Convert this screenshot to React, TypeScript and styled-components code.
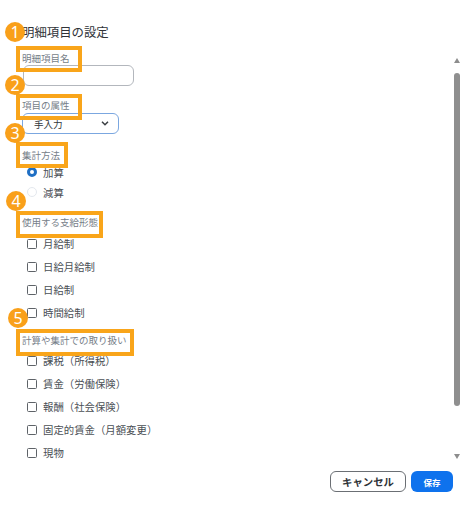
import React from "react";
import styled, { createGlobalStyle } from "styled-components";

const Global = createGlobalStyle`
  html, body { margin: 0; padding: 0; background: #fff; }
  body { font-family: "Noto Sans CJK JP", "Noto Sans", sans-serif; overflow: hidden; }
`;

const Dialog = styled.div`
  position: relative;
  width: 470px;
  height: 513px;
  box-sizing: border-box;
  padding: 22px 8px 20px 22px;
  display: flex;
  flex-direction: column;
`;
const Title = styled.h1`
  margin: 0;
  height: 20px;
  font-size: 12.4px;
  line-height: 20px;
  font-weight: 400;
  color: #2f3338;
`;
const Body = styled.div`
  display: flex;
  height: 418px;
  margin-top: 8px;
`;
const Form = styled.div`
  flex: 1;
  display: flex;
  flex-direction: column;
`;
const Label = styled.div<{ $top: number }>`
  margin-top: ${(p) => p.$top}px;
  height: 14px;
  font-size: 9.5px;
  line-height: 14px;
  color: #767e88;
`;
const Input = styled.div`
  width: 111px;
  height: 21px;
  box-sizing: border-box;
  margin-left: 1px;
  border: 1.5px solid #b3b7bd;
  border-radius: 6px;
  background: #fff;
`;
const Select = styled.div`
  width: 97px;
  height: 21px;
  box-sizing: border-box;
  margin-top: 1px;
  padding: 0 9px 0 11px;
  border: 1.5px solid #7ba7e0;
  border-radius: 6px;
  display: flex;
  align-items: center;
  justify-content: space-between;
  font-size: 9.5px;
  color: #33373c;
`;
const OptionRow = styled.div<{ $h: number; $top?: number }>`
  height: ${(p) => p.$h}px;
  margin-top: ${(p) => p.$top ?? 0}px;
  display: flex;
  align-items: center;
  padding-left: 5px;
  gap: 6px;
  font-size: 10.4px;
  color: #4a4f55;
`;
const Radio = styled.span<{ $on?: boolean }>`
  width: 10px;
  height: 10px;
  box-sizing: border-box;
  border-radius: 50%;
  border: ${(p) => (p.$on ? "3px solid #1f6fc4" : "1px solid #e4e8ee")};
  background: #fff;
`;
const Check = styled.span`
  width: 10px;
  height: 10px;
  box-sizing: border-box;
  border: 1.5px solid #5e6368;
  border-radius: 1.5px;
  background: #fff;
`;
const ScrollTrack = styled.div`
  width: 8px;
  margin-right: 1px;
  display: flex;
  flex-direction: column;
  align-items: center;
`;
const ArrowUp = styled.span`
  width: 0;
  height: 0;
  margin-top: 8px;
  border-left: 3px solid transparent;
  border-right: 3px solid transparent;
  border-bottom: 5px solid #8d8d8d;
`;
const Thumb = styled.span`
  width: 6px;
  height: 333px;
  margin-top: 10px;
  border-radius: 3px;
  background: #8f8f8f;
`;
const ArrowDown = styled.span`
  width: 0;
  height: 0;
  margin-top: 48px;
  border-left: 3px solid transparent;
  border-right: 3px solid transparent;
  border-top: 5px solid #8d8d8d;
`;
const Footer = styled.div`
  display: flex;
  justify-content: flex-end;
  gap: 5px;
  margin: 3px 9px 0 0;
`;
const Cancel = styled.button`
  width: 76px;
  height: 21px;
  padding: 0;
  border: 1.5px solid #6b6f74;
  border-radius: 6px;
  background: #fff;
  color: #2f3338;
  font: 700 10.4px "Noto Sans CJK JP", sans-serif;
`;
const Save = styled.button`
  width: 42px;
  height: 21px;
  padding: 0;
  border: 0;
  border-radius: 6px;
  background: #0e72ed;
  color: #fff;
  font: 700 8.5px "Noto Sans CJK JP", sans-serif;
`;
const Highlight = styled.div<{ $x: number; $y: number; $w: number; $h: number }>`
  position: absolute;
  left: ${(p) => p.$x}px;
  top: ${(p) => p.$y}px;
  width: ${(p) => p.$w}px;
  height: ${(p) => p.$h}px;
  box-sizing: border-box;
  border: 4px solid #f9a51a;
`;
const Badge = styled.div<{ $x: number; $y: number }>`
  position: absolute;
  left: ${(p) => p.$x - 10}px;
  top: ${(p) => p.$y - 10}px;
  width: 20px;
  height: 20px;
  border-radius: 50%;
  background: #f9a01a;
  color: #fff;
  font: 400 16px/20px "Noto Sans", sans-serif;
  text-align: center;
`;

const ChevronIcon = () => (
  <svg width="8" height="5" viewBox="0 0 8 5" fill="none">
    <path d="M1 .8l3 3 3-3" stroke="#3a3e43" strokeWidth="1.5" />
  </svg>
);

const pay = ["月給制", "日給月給制", "日給制", "時間給制"];
const calc = ["課税（所得税）", "賃金（労働保険）", "報酬（社会保険）", "固定的賃金（月額変更）", "現物"];
const boxes = [
  { x: 16, y: 46, w: 66, h: 26 },
  { x: 16, y: 94, w: 66, h: 26 },
  { x: 16, y: 142, w: 52, h: 26 },
  { x: 16, y: 211, w: 87, h: 27 },
  { x: 16, y: 329, w: 118, h: 27 },
];
const badges = [
  { x: 15, y: 32 },
  { x: 15, y: 85 },
  { x: 15, y: 133 },
  { x: 16, y: 201 },
  { x: 18, y: 318 },
];

export default function App() {
  return (
    <Dialog>
      <Global />
      <Title>明細項目の設定</Title>
      <Body>
        <Form>
          <Label $top={1}>明細項目名</Label>
          <Input />
          <Label $top={12}>項目の属性</Label>
          <Select>
            手入力
            <ChevronIcon />
          </Select>
          <Label $top={14}>集計方法</Label>
          <OptionRow $h={20} $top={0}>
            <Radio $on />
            加算
          </OptionRow>
          <OptionRow $h={20}>
            <Radio />
            減算
          </OptionRow>
          <Label $top={13}>使用する支給形態</Label>
          {pay.map((t, i) => (
            <OptionRow key={t} $h={23} $top={i === 0 ? 3 : 0}>
              <Check />
              {t}
            </OptionRow>
          ))}
          <Label $top={9}>計算や集計での取り扱い</Label>
          {calc.map((t, i) => (
            <OptionRow key={t} $h={23} $top={i === 0 ? 2 : 0}>
              <Check />
              {t}
            </OptionRow>
          ))}
        </Form>
        <ScrollTrack>
          <ArrowUp />
          <Thumb />
          <ArrowDown />
        </ScrollTrack>
      </Body>
      <Footer>
        <Cancel>キャンセル</Cancel>
        <Save>保存</Save>
      </Footer>
      {boxes.map((b) => (
        <Highlight key={b.y} $x={b.x} $y={b.y} $w={b.w} $h={b.h} />
      ))}
      {badges.map((b, i) => (
        <Badge key={b.y} $x={b.x} $y={b.y}>
          {i + 1}
        </Badge>
      ))}
    </Dialog>
  );
}
